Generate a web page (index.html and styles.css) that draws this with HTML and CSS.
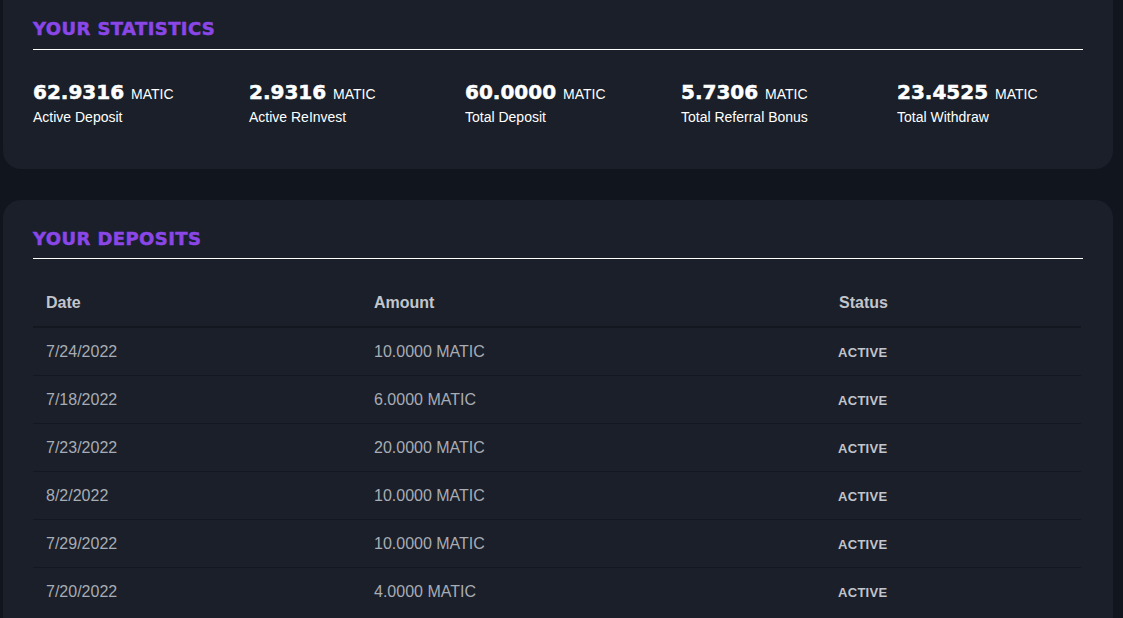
FILE: index.html
```html
<!DOCTYPE html>
<html lang="en">
<head>
  <meta charset="UTF-8">
  <title>Dashboard - Statistics</title>
  <meta name="viewport" content="width=device-width, initial-scale=1">
  <link rel="stylesheet" href="styles.css">
</head>
<body>
  <main class="page">
    <section class="card card-stats">
      <h2 class="card-title">YOUR STATISTICS</h2>
      <div class="stats">
        <div class="stat">
          <div class="stat-value"><b>62.9316</b> MATIC</div>
          <div class="stat-label">Active Deposit</div>
        </div>
        <div class="stat">
          <div class="stat-value"><b>2.9316</b> MATIC</div>
          <div class="stat-label">Active ReInvest</div>
        </div>
        <div class="stat">
          <div class="stat-value"><b>60.0000</b> MATIC</div>
          <div class="stat-label">Total Deposit</div>
        </div>
        <div class="stat">
          <div class="stat-value"><b>5.7306</b> MATIC</div>
          <div class="stat-label">Total Referral Bonus</div>
        </div>
        <div class="stat">
          <div class="stat-value"><b>23.4525</b> MATIC</div>
          <div class="stat-label">Total Withdraw</div>
        </div>
      </div>
    </section>

    <section class="card card-deposits">
      <h2 class="card-title">YOUR DEPOSITS</h2>
      <table class="deposits">
        <thead>
          <tr>
            <th class="col-date">Date</th>
            <th class="col-amount">Amount</th>
            <th class="col-status">Status</th>
          </tr>
        </thead>
        <tbody>
          <tr><td>7/24/2022</td><td>10.0000 MATIC</td><td><span class="status">ACTIVE</span></td></tr>
          <tr><td>7/18/2022</td><td>6.0000 MATIC</td><td><span class="status">ACTIVE</span></td></tr>
          <tr><td>7/23/2022</td><td>20.0000 MATIC</td><td><span class="status">ACTIVE</span></td></tr>
          <tr><td>8/2/2022</td><td>10.0000 MATIC</td><td><span class="status">ACTIVE</span></td></tr>
          <tr><td>7/29/2022</td><td>10.0000 MATIC</td><td><span class="status">ACTIVE</span></td></tr>
          <tr><td>7/20/2022</td><td>4.0000 MATIC</td><td><span class="status">ACTIVE</span></td></tr>
        </tbody>
      </table>
    </section>
  </main>
</body>
</html>
```

FILE: styles.css
```css
body {
  margin: 0;
  background: #11151d;
  font-family: "Liberation Sans", Arial, sans-serif;
  color: #fff;
  overflow: hidden;
}
.page {
  padding: 0 10px 0 3px;
}
.card {
  background: #1a1f29;
  border-radius: 18px;
  padding: 0 30px;
}
.card-stats {
  margin-top: -20px;
  padding-top: 38px;
  padding-bottom: 43px;
}
.card-deposits {
  margin-top: 31px;
  padding-top: 28px;
  padding-bottom: 20px;
}
.card-title {
  margin: 0;
  font-family: "DejaVu Sans", sans-serif;
  font-weight: bold;
  font-size: 18px;
  letter-spacing: 0.4px;
  line-height: 22px;
  color: #8a46e6;
  -webkit-text-stroke: 0.5px #8a46e6;
  padding-bottom: 9px;
  border-bottom: 1px solid #fff;
}
.card-deposits .card-title {
  padding-bottom: 8px;
}
.stats {
  display: grid;
  grid-template-columns: repeat(5, 216px);
  margin-top: 30px;
}
.stat-value {
  font-size: 14px;
  line-height: 24px;
}
.stat-value b {
  font-family: "DejaVu Sans", sans-serif;
  font-size: 20px;
  -webkit-text-stroke: 0.5px #fff;
  margin-right: 3px;
}
.stat-label {
  font-size: 14px;
  line-height: 18px;
  margin-top: 2px;
}
.deposits {
  width: 1048px;
  border-collapse: collapse;
  margin-top: 20px;
  font-size: 16px;
}
.col-date { width: 302px; }
.col-amount { width: 439px; }
th, td {
  text-align: left;
  padding: 0 13px;
  height: 47px;
  border-bottom: 1px solid #121720;
}
th {
  color: #c2c5cc;
  font-weight: bold;
  font-size: 16px;
  border-bottom-width: 2px;
}
td {
  color: #a8acb4;
}
tbody tr:last-child td {
  border-bottom: none;
}
.status {
  font-weight: bold;
  font-size: 13px;
  letter-spacing: 0.3px;
  color: #c2c5cc;
  margin-left: -1px;
}
```
